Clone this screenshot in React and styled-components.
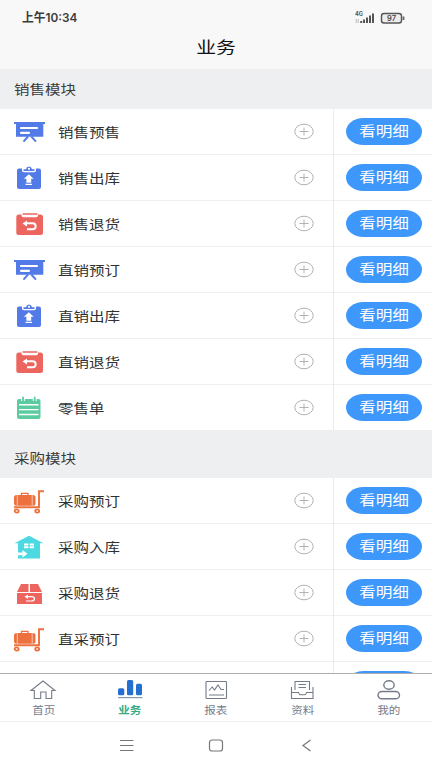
import React from "react";
import styled, { createGlobalStyle } from "styled-components";

const GlobalStyle = createGlobalStyle`
  *, *::before, *::after { box-sizing: border-box; }
  html, body { margin: 0; padding: 0; background: #fff; overflow: hidden; }
  button { font: inherit; border: 0; padding: 0; }
`;

const Screen = styled.div`
  width: 432px;
  height: 768px;
  display: flex;
  flex-direction: column;
  overflow: hidden;
  background: #fff;
  color: #303030;
  font-family: Roboto, "Noto Sans CJK SC", sans-serif;
`;

const Wide = styled.span`
  display: inline-block;
  white-space: nowrap;
  transform: scaleX(${(p) => p.$stretch || 1.19});
  transform-origin: ${(p) => p.$origin || "center"};
`;

const StatusBar = styled.div`
  flex: none;
  height: 36px;
  display: flex;
  align-items: center;
  justify-content: space-between;
  padding: 0 27px 0 22px;
  background: #f8f8f8;
  color: #3c3c3c;
`;

const Clock = styled.div`
  font: 600 12px/16px Inter, "Noto Sans CJK SC", sans-serif;
`;

const StatusIcons = styled.svg`
  width: 50px;
  height: 18px;
`;

const TitleBar = styled.header`
  flex: none;
  height: 33px;
  display: flex;
  justify-content: center;
  background: #f8f8f8;
  color: #111;
  font-size: 16px;
  line-height: 23px;
`;

const Content = styled.main`
  flex: none;
  height: 604px;
  overflow: hidden;
`;

const SectionHeader = styled.h2`
  margin: 0;
  height: ${(p) => p.$height}px;
  padding: ${(p) => p.$top}px 0 0 14px;
  background: #eeeff1;
  color: #3a3a3a;
  font-size: 13px;
  font-weight: 400;
  line-height: 20px;
`;

const Row = styled.div`
  height: 46px;
  display: grid;
  grid-template-columns: 12px 34px 12px 1fr 40px 99px;
  align-items: center;
  border-bottom: 1px solid #eeeff1;
`;

const RowIcon = styled.svg`
  grid-column: 2;
  width: 34px;
  height: 32px;
`;

const RowLabel = styled.div`
  grid-column: 4;
  font-size: 13px;
  line-height: 20px;
  color: #303030;
  padding-top: 2px;
`;

const AddButton = styled.button`
  grid-column: 5;
  width: 22px;
  height: 18px;
  background: none;
  svg { display: block; }
`;

const Action = styled.div`
  grid-column: 6;
  height: 46px;
  border-left: 1px solid #eaebed;
  padding: 9px 0 0 12px;
`;

const DetailButton = styled.button`
  display: flex;
  align-items: center;
  justify-content: center;
  width: 76px;
  height: 27px;
  border-radius: 18px / 14px;
  background: #3e98fb;
  color: #fff;
  font-size: 14px;
  line-height: 20px;
  padding-bottom: 1px;
`;

const TabBar = styled.nav`
  flex: none;
  height: 49px;
  display: grid;
  grid-template-columns: repeat(5, 1fr);
  border-top: 1px solid #adadad;
  border-bottom: 1px solid #eeeff1;
`;

const Tab = styled.div`
  display: flex;
  flex-direction: column;
  align-items: center;
  padding-top: 4px;
  font-size: 9.7px;
  line-height: 14px;
  font-weight: ${(p) => (p.$active ? 700 : 400)};
  color: ${(p) => (p.$active ? "#35ac85" : "#747b89")};
  svg { display: block; width: 28px; height: 25px; flex: none; margin-bottom: 1px; }
`;

const SystemBar = styled.footer`
  flex: none;
  height: 46px;
  display: grid;
  grid-template-columns: 118px 18px 71px 18px 73px 18px;
  align-items: center;
  svg { width: 18px; height: 16px; }
  svg:nth-of-type(1) { grid-column: 2; }
  svg:nth-of-type(2) { grid-column: 4; }
  svg:nth-of-type(3) { grid-column: 6; }
`;

const icons = {
  board: (
    <g>
      <path d="M2 6H33V8H31.3V20.8H4V8H2Z" fill="#527be7" />
      <path d="M9 12H25M9 16.8H17" stroke="#fff" strokeWidth="2.2" strokeLinecap="round" />
      <path d="M16 20.5L11.5 25.6M19.3 20.5L24 25.6" stroke="#527be7" strokeWidth="1.9" />
    </g>
  ),
  clip: (
    <g>
      <rect x="5" y="6.5" width="24" height="20.5" rx="2" fill="#527be7" />
      <path d="M10 6V8.4Q10 10.2 12 10.2H22Q24 10.2 24 8.4V6Z" fill="#fff" />
      <path d="M11.5 9V7.2H14Q14.5 4.5 17 4.5Q19.5 4.5 20 7.2H22.5V9Z" fill="#527be7" />
      <circle cx="17" cy="6.8" r="1.1" fill="#fff" />
      <path d="M16.8 12.3L21.7 16.8H19.2V20.8H14.4V16.8H11.9ZM13.5 21.8H20V23H13.5Z" fill="#fff" />
    </g>
  ),
  back: (
    <g>
      <rect x="4.3" y="6.5" width="26.7" height="20.5" rx="2.5" fill="#ec665f" />
      <rect x="9.5" y="5" width="16.5" height="4.3" rx="1.8" fill="#fff" />
      <path d="M11 6H25" stroke="#ec665f" strokeWidth="1.3" strokeLinecap="round" />
      <path d="M14 15.3H20.5Q23.7 15.3 23.7 18.2T20.5 21.2H15" fill="none" stroke="#fff" strokeWidth="1.9" />
      <path d="M10.5 15.4L15 12.4V18.4Z" fill="#fff" />
    </g>
  ),
  list: (
    <g>
      <rect x="5" y="7" width="23.5" height="20" rx="2" fill="#5ccca0" />
      <path d="M11 5V9M22.7 5V9" stroke="#fff" strokeWidth="3.8" />
      <path d="M11 5.5V8.7M22.7 5.5V8.7" stroke="#5ccca0" strokeWidth="1.8" strokeLinecap="round" />
      <path d="M7 12.7H26.5M7 17.6H26.5M7 22.5H26.5" stroke="#fff" strokeWidth="1.4" />
    </g>
  ),
  cart: (
    <g stroke="#ed713e" fill="none">
      <rect x="2" y="10" width="21.5" height="10.8" rx="2.5" fill="#ed713e" stroke="none" />
      <path d="M5.3 10V20.8M20.2 10V20.8" stroke="#fff" strokeWidth=".6" />
      <path d="M9.5 10.5V8.3H16V10.5" strokeWidth="1.3" />
      <path d="M2 22.3H27V6.3H32" strokeWidth="1.9" />
      <ellipse cx="4.7" cy="26" rx="2" ry="1.6" strokeWidth="1.8" />
      <ellipse cx="25.2" cy="26" rx="2" ry="1.6" strokeWidth="1.8" />
    </g>
  ),
  house: (
    <g>
      <path d="M17 4.8L31.5 12.3H28V27.5H6V12.3H2.5Z" fill="#4cd9e2" />
      <path d="M12 12.5H16.4V14.4H12ZM17.6 12.5H22V14.4H17.6ZM12 15.3H16.4V17.2H12ZM17.6 15.3H22V17.2H17.6Z" fill="#fff" />
      <path d="M5 21.5H10.5V19L15.5 22.8L10.5 26.6V24.2H5Z" fill="#fff" />
    </g>
  ),
  box: (
    <g>
      <path d="M9 7H16.5V15H5ZM18 7H26L30 15H18ZM5 16H30V27H5Z" fill="#ec665f" />
      <path d="M15 19.6H19.5Q22.5 19.6 22.5 21.8T19.5 24H14" fill="none" stroke="#fff" strokeWidth="1.2" />
      <path d="M12.5 19.7L16 17.5V22Z" fill="#fff" />
    </g>
  ),
};

const sales = [
  ["board", "销售预售"],
  ["clip", "销售出库"],
  ["back", "销售退货"],
  ["board", "直销预订"],
  ["clip", "直销出库"],
  ["back", "直销退货"],
  ["list", "零售单"],
];

const purchases = [
  ["cart", "采购预订"],
  ["house", "采购入库"],
  ["box", "采购退货"],
  ["cart", "直采预订"],
];

function ModuleRow({ icon, label }) {
  return (
    <Row>
      <RowIcon viewBox="0 0 34 32">{icons[icon]}</RowIcon>
      <RowLabel><Wide $origin="left">{label}</Wide></RowLabel>
      <AddButton aria-label="新增">
        <svg width="22" height="18" viewBox="0 0 22 18" fill="none" stroke="#b1b1b1">
          <ellipse cx="11" cy="8.5" rx="9.2" ry="7.3" />
          <path d="M6.5 8.5H15.5M11 4.5V12.5" />
        </svg>
      </AddButton>
      <Action>
        <DetailButton><Wide>看明细</Wide></DetailButton>
      </Action>
    </Row>
  );
}

/* Top edge of the next row, which is scrolled under the tab bar. */
function PeekRow() {
  return (
    <Row>
      <RowIcon viewBox="0 0 34 32">{icons.house}</RowIcon>
      <Action><DetailButton /></Action>
    </Row>
  );
}

const tabs = [
  ["首页", (
    <path key="i" d="M2 12.5L14 3L26 12.5H22.7V20.5H17V14H11.7V20.5H5.3V12.5Z" />
  )],
  ["业务", (
    <g key="i" fill="#246fd2" stroke="none">
      <rect x="2" y="10.3" width="6.3" height="7" rx="1.5" />
      <rect x="11" y="2" width="6.2" height="15.3" rx="1.5" />
      <rect x="20" y="5.7" width="6" height="11.6" rx="1.5" />
      <rect x="2" y="19" width="24.5" height="1.2" fill="#8499b5" />
    </g>
  )],
  ["报表", (
    <g key="i">
      <rect x="4" y="3.5" width="20.5" height="17" rx=".8" />
      <path d="M7 12.5L10.2 9L12.5 12L16 7L19 11.5H22M7 17H22" />
    </g>
  )],
  ["资料", (
    <g key="i">
      <path d="M7 12V3.5H21.5V12M10.5 6.5H18M10.5 9.5H18" />
      <path d="M3.5 9V20.5H25V9M3.5 14.5H10.5Q11 16.8 13 16.8H16Q18 16.8 18.5 14.5H25" />
    </g>
  )],
  ["我的", (
    <g key="i" strokeWidth="1.4">
      <ellipse cx="14" cy="7" rx="5.2" ry="4.3" />
      <rect x="3" y="13.5" width="21.5" height="7.3" rx="4" />
    </g>
  )],
];

export default function App() {
  return (
    <>
      <GlobalStyle />
      <Screen>
        <StatusBar>
          <Clock><Wide $stretch={0.98} $origin="left">上午10:34</Wide></Clock>
          <StatusIcons viewBox="0 0 50 18">
            <text x="0" y="7" fontSize="5.5" fontWeight="700" fontFamily="Inter, sans-serif" fill="#555" textLength="8" lengthAdjust="spacingAndGlyphs">4G</text>
            <path d="M1.2 10V14M3.2 10V14" stroke="#aaa" strokeWidth=".8" />
            <path d="M6.2 12V14M9 10.5V14M12 8.5V14M15 6.5V14M18 4.5V14" stroke="#555" strokeWidth="2" />
            <rect x="26.5" y="4.5" width="20" height="9.5" rx="2.5" fill="#ededed" stroke="#555" strokeWidth="1.4" />
            <path d="M48.5 7.5V11" stroke="#666" strokeWidth="1.8" />
            <text x="36.5" y="12" textAnchor="middle" fontSize="7.5" fontWeight="600" fontFamily="Inter, sans-serif" fill="#444">97</text>
          </StatusIcons>
        </StatusBar>
        <TitleBar><Wide $stretch={1.24}>业务</Wide></TitleBar>
        <Content>
          <SectionHeader $height={40} $top={11}><Wide $origin="left">销售模块</Wide></SectionHeader>
          {sales.map(([icon, label]) => <ModuleRow key={label} icon={icon} label={label} />)}
          <SectionHeader $height={47} $top={18}><Wide $origin="left">采购模块</Wide></SectionHeader>
          {purchases.map(([icon, label]) => <ModuleRow key={label} icon={icon} label={label} />)}
          <PeekRow />
        </Content>
        <TabBar>
          {tabs.map(([label, drawing], i) => (
            <Tab key={label} $active={i === 1}>
              <svg viewBox="0 0 28 25" fill="none" stroke="#747b89" strokeWidth="1.1">{drawing}</svg>
              <Wide>{label}</Wide>
            </Tab>
          ))}
        </TabBar>
        <SystemBar>
          <svg viewBox="0 0 18 16" fill="none" stroke="#777"><path d="M2 3.5H15.5M2 8.5H15.5M2 13.5H15.5" /></svg>
          <svg viewBox="0 0 18 16" fill="none" stroke="#777" strokeWidth="1.2"><rect x="2.5" y="3" width="13" height="11" rx="2.5" /></svg>
          <svg viewBox="0 0 18 16" fill="none" stroke="#777" strokeWidth="1.2"><path d="M12.5 3L5 8.5L12.5 14" /></svg>
        </SystemBar>
      </Screen>
    </>
  );
}
